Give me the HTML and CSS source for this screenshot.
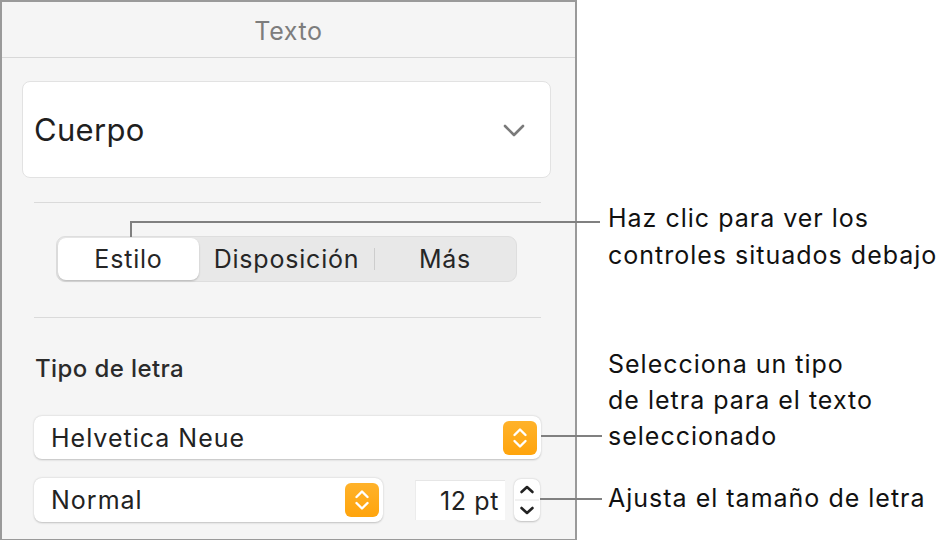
FILE: index.html
```html
<!DOCTYPE html>
<html lang="es">
<head>
    <meta charset="UTF-8">
    <meta name="viewport" content="width=device-width, initial-scale=1.0">
    <title>Texto - Inspector</title>
    <link rel="stylesheet" href="styles.css">
</head>
<body>

<div class="page">
    <div class="inspector">
        <div class="inspector-title">Texto</div>

        <div class="inspector-body">
            <!-- Paragraph style -->
            <div class="style-popup">
                <span>Cuerpo</span>
                <svg class="chevron" width="22" height="13" viewBox="0 0 22 13">
                    <path d="M2 2 L11 11 L20 2" fill="none" stroke="#7a7a7a" stroke-width="2.6" stroke-linecap="round" stroke-linejoin="round"/>
                </svg>
            </div>

            <div class="divider"></div>

            <!-- Tabs -->
            <div class="segmented">
                <div class="segment selected">Estilo</div>
                <div class="segment segment-wide">Disposición</div>
                <div class="segment-sep"></div>
                <div class="segment">Más</div>
            </div>

            <div class="divider divider-low"></div>

            <!-- Font -->
            <div class="section-title">Tipo de letra</div>

            <div class="popup popup-family">
                <span>Helvetica Neue</span>
                <div class="popup-arrows">
                    <svg width="18" height="24" viewBox="0 0 18 24">
                        <path d="M3.5 9 L9 3.5 L14.5 9 M3.5 15 L9 20.5 L14.5 15" fill="none" stroke="#fff" stroke-width="2.4" stroke-linecap="round" stroke-linejoin="round"/>
                    </svg>
                </div>
            </div>

            <div class="font-row">
                <div class="popup popup-typeface">
                    <span>Normal</span>
                    <div class="popup-arrows">
                        <svg width="18" height="24" viewBox="0 0 18 24">
                            <path d="M3.5 9 L9 3.5 L14.5 9 M3.5 15 L9 20.5 L14.5 15" fill="none" stroke="#fff" stroke-width="2.4" stroke-linecap="round" stroke-linejoin="round"/>
                        </svg>
                    </div>
                </div>
                <div class="size-field">12 pt</div>
                <div class="stepper">
                    <svg width="26" height="42" viewBox="0 0 26 42">
                        <path d="M7.5 13 L13 8 L18.5 13" fill="none" stroke="#222" stroke-width="2.6" stroke-linecap="round" stroke-linejoin="round"/>
                        <line x1="1" y1="21" x2="25" y2="21" stroke="#e4e4e4" stroke-width="1"/>
                        <path d="M7.5 29 L13 34 L18.5 29" fill="none" stroke="#222" stroke-width="2.6" stroke-linecap="round" stroke-linejoin="round"/>
                    </svg>
                </div>
            </div>
        </div>
    </div>

    <!-- Callouts -->
    <div class="leader leader-tabs-v"></div>
    <div class="leader leader-tabs-h"></div>
    <div class="leader leader-family"></div>
    <div class="leader leader-size"></div>

    <div class="callout callout-tabs">Haz clic para ver los<br>controles situados debajo</div>
    <div class="callout callout-family">Selecciona un tipo<br>de letra para el texto<br>seleccionado</div>
    <div class="callout callout-size">Ajusta el tamaño de letra</div>
</div>

</body>
</html>
```

FILE: styles.css
```css
body {
    margin: 0;
    background-color: #fff;
    font-family: 'Inter', 'Roboto', sans-serif;
    color: #222;
}

.page {
    position: relative;
    width: 950px;
    height: 540px;
    overflow: hidden;
}

/* Inspector panel */
.inspector {
    box-sizing: border-box;
    width: 577px;
    height: 541px;
    background-color: #f5f5f5;
    border: 2px solid #9a9a9a;
}

.inspector-title {
    height: 55px;
    line-height: 58px;
    text-align: center;
    font-size: 25px;
    letter-spacing: 0.6px;
    color: #7d7d7d;
    border-bottom: 1px solid #d8d8d8;
}

.inspector-body {
    display: flex;
    flex-direction: column;
}

.style-popup {
    box-sizing: border-box;
    display: flex;
    align-items: center;
    justify-content: space-between;
    height: 97px;
    margin: 23px 24px 0 20px;
    padding: 0 25px 0 11px;
    background-color: #fff;
    border: 1px solid #e2e2e2;
    border-radius: 8px;
    font-size: 31px;
    letter-spacing: 0.3px;
    color: #1f1f1f;
}

.chevron {
    margin-top: 2px;
}

.divider {
    height: 1px;
    margin: 24px 34px 0 32px;
    background-color: #dadada;
}

.divider-low {
    margin-top: 35px;
}

/* Segmented control */
.segmented {
    box-sizing: border-box;
    display: flex;
    align-items: center;
    width: 461px;
    height: 46px;
    margin: 33px 0 0 54px;
    padding: 1px;
    background-color: #e8e8e8;
    border: 1px solid #dedede;
    border-radius: 9px;
}

.segment {
    flex: 1;
    height: 42px;
    line-height: 42px;
    text-align: center;
    font-size: 25px;
    letter-spacing: 0.8px;
    color: #262626;
}

.segment.selected {
    flex: 0 0 141px;
    background-color: #fff;
    border-radius: 8px;
    box-shadow: 0 1px 2px rgba(0, 0, 0, 0.22);
}

.segment.segment-wide {
    flex: 0 0 175px;
}

.segment-sep {
    width: 1px;
    height: 22px;
    background-color: #cdcdcd;
}

/* Font section */
.section-title {
    margin: 39px 0 0 33px;
    line-height: 24px;
    font-size: 24px;
    font-weight: 500;
    letter-spacing: 0.4px;
    color: #2b2b2b;
}

.popup {
    box-sizing: border-box;
    display: flex;
    align-items: center;
    justify-content: space-between;
    padding: 0 4px 0 17px;
    background-color: #fff;
    border-radius: 8px;
    box-shadow: 0 0.5px 2px rgba(0, 0, 0, 0.22);
    font-size: 25px;
    letter-spacing: 1px;
    color: #222;
}

.popup-family {
    width: 507px;
    height: 43px;
    margin: 35px 0 0 32px;
}

.popup-arrows {
    display: flex;
    align-items: center;
    justify-content: center;
    width: 34px;
    height: 34px;
    border-radius: 6px;
    background: linear-gradient(#ffb22a, #ffa40c);
}

.font-row {
    display: flex;
    align-items: center;
    margin: 19px 0 0 32px;
}

.popup-typeface {
    width: 349px;
    height: 44px;
}

.size-field {
    box-sizing: border-box;
    width: 90px;
    height: 40px;
    margin-left: 32px;
    padding-right: 6px;
    line-height: 40px;
    text-align: right;
    font-size: 25px;
    letter-spacing: 0.6px;
    background-color: #fff;
    border-top: 1px solid #e6e6e6;
    border-left: 1px solid #ececec;
}

.stepper {
    width: 26px;
    height: 42px;
    margin-left: 9px;
    background-color: #fff;
    border-radius: 7px;
    box-shadow: 0 0.5px 2px rgba(0, 0, 0, 0.22);
}

.stepper svg {
    display: block;
}

/* Callout leaders and texts */
.leader {
    position: absolute;
    background-color: #808080;
}

.leader-tabs-v {
    left: 130px;
    top: 221px;
    width: 2px;
    height: 16px;
}

.leader-tabs-h {
    left: 130px;
    top: 221px;
    width: 470px;
    height: 2px;
}

.leader-family {
    left: 541px;
    top: 435px;
    width: 61px;
    height: 2px;
}

.leader-size {
    left: 540px;
    top: 498px;
    width: 62px;
    height: 2px;
}

.callout {
    position: absolute;
    left: 608px;
    font-size: 25px;
    letter-spacing: 1px;
    line-height: 37px;
    color: #111;
}

.callout-tabs {
    top: 200px;
}

.callout-family {
    top: 346px;
    line-height: 36px;
}

.callout-size {
    top: 480px;
}
```
